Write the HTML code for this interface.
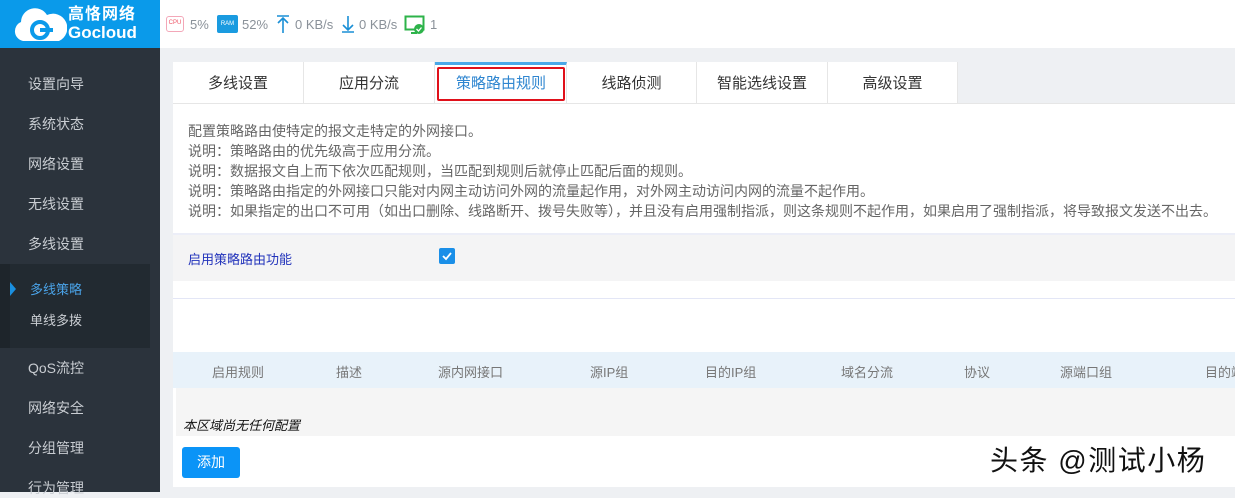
<!DOCTYPE html><html><head><meta charset="utf-8"><style>
*{margin:0;padding:0;box-sizing:border-box}
body{width:1235px;height:492px;overflow:hidden;background:#eef0f3;font-family:"Liberation Sans","Noto Sans CJK SC",sans-serif;position:relative}
.abs{position:absolute}
#logo{left:0;top:0;width:160px;height:48px;background:#0a9aea;color:#fff}
#side{left:0;top:48px;width:160px;height:444px;background:#2b333c}
.si{position:absolute;left:28px;color:#c9cdd2;font-size:14px;line-height:20px}
#top{left:160px;top:0;width:1075px;height:48px;background:#fff;font-size:13px;color:#8a9199}
.tab{position:absolute;top:62px;height:41px;background:#fff;border-right:1px solid #e6e6e6;font-size:15px;color:#333;text-align:center;line-height:43px}
#panel{left:173px;top:103px;width:1062px;height:384px;background:#fff;border-top:1px solid #e6e6e6}
.t{position:absolute;left:15px;font-size:14px;color:#666;white-space:nowrap;line-height:19px}
.th{position:absolute;top:10px;font-size:13px;color:#777;white-space:nowrap}
</style></head><body>
<div id="logo" class="abs">
<svg class="abs" style="left:11px;top:7px" width="56" height="36" viewBox="0 0 56 36"><path d="M12 34 A10 10 0 0 1 10 15 A14 14 0 0 1 36 8 A11 11 0 0 1 48 34 Z" fill="#fff"/><circle cx="29" cy="23" r="8" fill="none" stroke="#0a9aea" stroke-width="4"/><path d="M29 23 H42" stroke="#0a9aea" stroke-width="4"/></svg>
<div class="abs" style="left:68px;top:6px;font-size:16px;line-height:18px;font-weight:bold;letter-spacing:1px">高恪网络</div>
<div class="abs" style="left:68px;top:24px;font-size:17px;line-height:18px;font-weight:bold">Gocloud</div>
</div>
<div id="top" class="abs">
<div class="abs" style="left:6px;top:16px;width:18px;height:16px;border:1.5px solid #f3a7b8;border-radius:3px;font-size:6px;color:#e56;text-align:center;line-height:13px">CPU</div>
<div class="abs" style="left:30px;top:17px">5%</div>
<div class="abs" style="left:57px;top:15px;width:21px;height:18px;background:#1a9be0;border-radius:2px;font-size:6px;color:#fff;text-align:center;line-height:18px">RAM</div>
<div class="abs" style="left:82px;top:17px">52%</div>
<svg class="abs" style="left:115px;top:14px" width="16" height="20"><path d="M2 2H14M8 4V19M3 9L8 4L13 9" stroke="#1a8fd6" stroke-width="1.6" fill="none"/></svg>
<div class="abs" style="left:135px;top:17px">0 KB/s</div>
<svg class="abs" style="left:180px;top:14px" width="16" height="20"><path d="M2 18H14M8 2V16M3 11L8 16L13 11" stroke="#1a8fd6" stroke-width="1.6" fill="none"/></svg>
<div class="abs" style="left:199px;top:17px">0 KB/s</div>
<svg class="abs" style="left:244px;top:15px" width="22" height="20"><rect x="1.5" y="1.5" width="18" height="13" fill="none" stroke="#2db34a" stroke-width="2"/><circle cx="15" cy="14" r="5" fill="#2db34a"/><path d="M12.5 14l2 2 3-3.5" stroke="#fff" stroke-width="1.3" fill="none"/><path d="M7 18H13" stroke="#2db34a" stroke-width="2"/></svg>
<div class="abs" style="left:270px;top:17px">1</div>
</div>
<div id="side" class="abs">
<div class="si" style="top:26px">设置向导</div>
<div class="si" style="top:66px">系统状态</div>
<div class="si" style="top:106px">网络设置</div>
<div class="si" style="top:146px">无线设置</div>
<div class="si" style="top:186px">多线设置</div>
<div class="abs" style="left:0;top:216px;width:150px;height:84px;background:#222a31"></div>
<div class="abs" style="left:0;top:216px;width:10px;height:84px;background:#1e252b"></div>
<div class="abs" style="left:10px;top:234px;width:0;height:0;border-top:7px solid transparent;border-bottom:7px solid transparent;border-left:6px solid #1a8fe0"></div>
<div class="si" style="left:30px;top:232px;font-size:13px;color:#4aa3e8">多线策略</div>
<div class="si" style="left:30px;top:263px;font-size:13px">单线多拨</div>
<div class="si" style="top:310px">QoS流控</div>
<div class="si" style="top:350px">网络安全</div>
<div class="si" style="top:390px">分组管理</div>
<div class="si" style="top:430px">行为管理</div>
</div>
<div class="tab" style="left:173px;width:131px">多线设置</div>
<div class="tab" style="left:304px;width:131px">应用分流</div>
<div class="tab" style="left:435px;width:132px;border-top:3px solid #4aa8e8;line-height:37px"><div style="position:absolute;left:2px;top:2px;width:128px;height:34px;border:2px solid #e0101a;border-radius:2px;color:#2f86d0;line-height:30px">策略路由规则</div></div>
<div class="tab" style="left:567px;width:130px">线路侦测</div>
<div class="tab" style="left:697px;width:131px">智能选线设置</div>
<div class="tab" style="left:828px;width:130px">高级设置</div>
<div id="panel" class="abs">
<div class="t" style="top:18px">配置策略路由使特定的报文走特定的外网接口。</div>
<div class="t" style="top:38px">说明：策略路由的优先级高于应用分流。</div>
<div class="t" style="top:58px">说明：数据报文自上而下依次匹配规则，当匹配到规则后就停止匹配后面的规则。</div>
<div class="t" style="top:78px">说明：策略路由指定的外网接口只能对内网主动访问外网的流量起作用，对外网主动访问内网的流量不起作用。</div>
<div class="t" style="top:98px">说明：如果指定的出口不可用（如出口删除、线路断开、拨号失败等），并且没有启用强制指派，则这条规则不起作用，如果启用了强制指派，将导致报文发送不出去。</div>
<div class="abs" style="left:0;top:129px;width:1062px;height:48px;background:#f4f4f5;border-top:2px solid #eceef8"></div>
<div class="abs" style="left:15px;top:145px;font-size:13px;color:#2233bb">启用策略路由功能</div>
<div class="abs" style="left:266px;top:144px;width:16px;height:16px;background:#1a8fe8;border-radius:2px"><svg width="16" height="16"><path d="M4 8l3 3 5-6" stroke="#fff" stroke-width="1.8" fill="none"/></svg></div>
<div class="abs" style="left:0;top:194px;width:1062px;height:1px;background:#e3e6f6"></div>
<div class="abs" style="left:0;top:248px;width:1062px;height:36px;background:#e8f2fa;overflow:hidden">
<div class="th" style="left:39px">启用规则</div><div class="th" style="left:163px">描述</div><div class="th" style="left:265px">源内网接口</div><div class="th" style="left:417px">源IP组</div><div class="th" style="left:532px">目的IP组</div><div class="th" style="left:668px">域名分流</div><div class="th" style="left:791px">协议</div><div class="th" style="left:887px">源端口组</div><div class="th" style="left:1032px">目的端口组</div></div>
<div class="abs" style="left:3px;top:284px;width:1059px;height:48px;background:#f5f5f5"></div>
<div class="abs" style="left:10px;top:311px;font-size:13px;font-style:italic;color:#111">本区域尚无任何配置</div>
<div class="abs" style="left:9px;top:343px;width:58px;height:31px;background:#0b94f7;border-radius:3px;color:#fff;font-size:14px;text-align:center;line-height:31px">添加</div>
<div class="abs" style="left:817px;top:339px;font-size:28px;line-height:36px;color:#111;letter-spacing:1.5px;white-space:nowrap">头条 @测试小杨</div>
</div>
</body></html>
